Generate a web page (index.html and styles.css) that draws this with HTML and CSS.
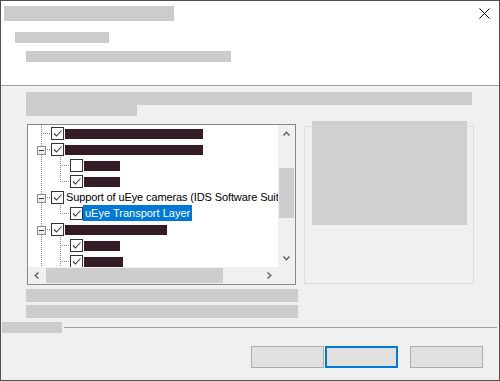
FILE: index.html
```html
<!DOCTYPE html>
<html lang="en">
<head>
<meta charset="utf-8">
<title>Setup</title>
<link rel="stylesheet" href="styles.css">
</head>
<body>
<div class="window">
  <header class="header">
    <div class="header-top">
      <div class="ph ph-title"></div>
      <button class="close" aria-label="Close">
        <svg width="11" height="11" viewBox="0 0 11 11"><path d="M0.5 0.5L10.5 10.5M10.5 0.5L0.5 10.5" stroke="#000" stroke-width="1" fill="none"/></svg>
      </button>
    </div>
    <div class="ph ph-sub1"></div>
    <div class="ph ph-sub2"></div>
  </header>

  <main class="content">
    <div class="ph ph-desc1"></div>
    <div class="ph ph-desc2"></div>

    <div class="panes">
      <div class="tree">
        <div class="tree-items">
          <div class="row">
            <span class="g0 node"></span>
            <span class="cb on"><svg viewBox="0 0 11 11"><path d="M2 5.5L4.5 8L9.5 2.5"/></svg></span>
            <span class="bar" style="width:138px"></span>
          </div>
          <div class="row">
            <span class="g0 node"><span class="exp"></span></span>
            <span class="cb on"><svg viewBox="0 0 11 11"><path d="M2 5.5L4.5 8L9.5 2.5"/></svg></span>
            <span class="bar" style="width:138px"></span>
          </div>
          <div class="row">
            <span class="g0"></span><span class="g1"></span>
            <span class="cb"></span>
            <span class="bar" style="width:36px"></span>
          </div>
          <div class="row">
            <span class="g0"></span><span class="g1 last"></span>
            <span class="cb on"><svg viewBox="0 0 11 11"><path d="M2 5.5L4.5 8L9.5 2.5"/></svg></span>
            <span class="bar" style="width:36px"></span>
          </div>
          <div class="row">
            <span class="g0 node"><span class="exp"></span></span>
            <span class="cb on"><svg viewBox="0 0 11 11"><path d="M2 5.5L4.5 8L9.5 2.5"/></svg></span>
            <span class="label">Support of uEye cameras (IDS Software Suite)</span>
          </div>
          <div class="row">
            <span class="g0"></span><span class="g1 last"></span>
            <span class="cb on"><svg viewBox="0 0 11 11"><path d="M2 5.5L4.5 8L9.5 2.5"/></svg></span>
            <span class="label selected">uEye Transport Layer</span>
          </div>
          <div class="row">
            <span class="g0 node"><span class="exp"></span></span>
            <span class="cb on"><svg viewBox="0 0 11 11"><path d="M2 5.5L4.5 8L9.5 2.5"/></svg></span>
            <span class="bar" style="width:102px"></span>
          </div>
          <div class="row">
            <span class="g0"></span><span class="g1"></span>
            <span class="cb on"><svg viewBox="0 0 11 11"><path d="M2 5.5L4.5 8L9.5 2.5"/></svg></span>
            <span class="bar" style="width:36px"></span>
          </div>
          <div class="row">
            <span class="g0"></span><span class="g1"></span>
            <span class="cb on"><svg viewBox="0 0 11 11"><path d="M2 5.5L4.5 8L9.5 2.5"/></svg></span>
            <span class="bar" style="width:39px"></span>
          </div>
        </div>

        <div class="vscroll">
          <span class="sbtn"><svg width="7" height="5" viewBox="0 0 7 5"><path d="M0.5 4.5L3.5 1.2L6.5 4.5"/></svg></span>
          <span class="vtrack"><span class="vthumb"></span></span>
          <span class="sbtn"><svg width="7" height="5" viewBox="0 0 7 5"><path d="M0.5 0.5L3.5 3.8L6.5 0.5"/></svg></span>
        </div>

        <div class="hscroll">
          <span class="sbtn"><svg width="5" height="7" viewBox="0 0 5 7"><path d="M4.5 0.5L1.2 3.5L4.5 6.5"/></svg></span>
          <span class="htrack"><span class="hthumb"></span></span>
          <span class="sbtn"><svg width="5" height="7" viewBox="0 0 5 7"><path d="M0.5 0.5L3.8 3.5L0.5 6.5"/></svg></span>
        </div>
        <div class="corner"></div>
      </div>

      <div class="group">
        <div class="ph preview"></div>
      </div>
    </div>

    <div class="ph ph-note1"></div>
    <div class="ph ph-note2"></div>
  </main>

  <div class="sep">
    <div class="ph ph-sep"></div>
    <div class="sep-line"></div>
  </div>

  <div class="buttons">
    <button class="btn"></button>
    <button class="btn focus"></button>
    <button class="btn wide-gap"></button>
  </div>
</div>
</body>
</html>
```

FILE: styles.css
```css
* { box-sizing: border-box; }

html, body {
  margin: 0;
  padding: 0;
  background: #f0f0f0;
}

body {
  font-family: "Liberation Sans", Arial, sans-serif;
  font-size: 11px;
  color: #000;
}

.window {
  width: 500px;
  height: 381px;
  border: 1px solid #505050;
  background: #f0f0f0;
  overflow: hidden;
}

.ph { background: #cccccc; }

/* header */
.header {
  height: 85px;
  background: #fff;
  border-bottom: 1px solid #a0a0a0;
}

.header-top {
  display: flex;
  justify-content: space-between;
  align-items: flex-start;
  padding: 5px 9px 0 3px;
}

.ph-title { width: 170px; height: 15px; }

.close {
  width: 11px;
  height: 11px;
  margin-top: 2px;
  padding: 0;
  border: 0;
  background: none;
  display: block;
}
.close svg { display: block; }

.ph-sub1 { width: 94px; height: 11px; margin: 11px 0 0 14px; }
.ph-sub2 { width: 205px; height: 11px; margin: 8px 0 0 25px; }

/* content */
.content { padding: 6px 0 0 25px; }

.ph-desc1 { width: 446px; height: 13px; }
.ph-desc2 { width: 111px; height: 11px; }

.panes {
  display: flex;
  align-items: flex-start;
  margin-top: 8px;
}

.tree {
  margin-left: 1px;
  width: 269px;
  height: 161px;
  border: 1px solid #828790;
  display: grid;
  grid-template-columns: 250px 17px;
  grid-template-rows: 142px 17px;
  background: #fff;
}

.tree-items {
  overflow: hidden;
  background: #fff;
}

.row {
  display: flex;
  height: 16px;
  white-space: nowrap;
}

.g0, .g1 {
  flex: none;
  height: 16px;
  display: flex;
  align-items: flex-start;
}

.g0 {
  width: 23px;
  background:
    repeating-linear-gradient(to bottom, #8a8a8a 0 1px, transparent 1px 2px) 13px 0 / 1px 100% no-repeat;
}
.g0.node {
  background:
    repeating-linear-gradient(to right, #8a8a8a 0 1px, transparent 1px 2px) 15px 8px / 8px 1px no-repeat,
    repeating-linear-gradient(to bottom, #8a8a8a 0 1px, transparent 1px 2px) 13px 0 / 1px 100% no-repeat;
}

.g1 {
  width: 19px;
  background:
    repeating-linear-gradient(to right, #8a8a8a 0 1px, transparent 1px 2px) 11px 8px / 8px 1px no-repeat,
    repeating-linear-gradient(to bottom, #8a8a8a 0 1px, transparent 1px 2px) 9px 0 / 1px 100% no-repeat;
}
.g1.last {
  background:
    repeating-linear-gradient(to right, #8a8a8a 0 1px, transparent 1px 2px) 11px 8px / 8px 1px no-repeat,
    repeating-linear-gradient(to bottom, #8a8a8a 0 1px, transparent 1px 2px) 9px 0 / 1px 9px no-repeat;
}

.exp {
  width: 9px;
  height: 9px;
  margin: 5px 0 0 9px;
  border: 1px solid #919191;
  background: linear-gradient(#ffffff, #e4e4e4);
  display: flex;
  align-items: center;
  justify-content: center;
}
.exp::before {
  content: "";
  width: 5px;
  height: 1px;
  background: #1f3a8a;
}

.cb {
  flex: none;
  width: 13px;
  height: 13px;
  margin-top: 2px;
  border: 1px solid #333;
  background: #fff;
}
.cb svg {
  display: block;
  width: 11px;
  height: 11px;
  fill: none;
  stroke: #3a3a3a;
  stroke-width: 1.1;
}

.bar {
  flex: none;
  height: 10px;
  margin: 4px 0 0 1px;
  background: #351b25;
}

.label {
  flex: none;
  height: 16px;
  line-height: 16px;
  padding: 0 2px;
  letter-spacing: -0.12px;
}
.label.selected {
  background: #0078d7;
  color: #fff;
  letter-spacing: 0;
}

/* scrollbars */
.vscroll {
  background: #f0f0f0;
  display: flex;
  flex-direction: column;
}
.sbtn {
  flex: none;
  width: 17px;
  height: 17px;
  display: flex;
  align-items: center;
  justify-content: center;
}
.sbtn svg {
  display: block;
  fill: none;
  stroke: #606060;
  stroke-width: 1.4;
}
.vtrack { flex: 1; padding: 26px 1px 0; }
.vthumb { display: block; height: 50px; background: #cdcdcd; }

.hscroll {
  background: #f0f0f0;
  display: flex;
}
.htrack { flex: 1; padding: 1px 0 1px 1px; }
.hthumb { display: block; width: 177px; height: 15px; background: #cdcdcd; }

.corner { background: #f0f0f0; }

/* right group */
.group {
  margin: 2px 0 0 8px;
  width: 170px;
  height: 158px;
  border: 1px solid #dcdcdc;
}
.preview {
  width: 155px;
  height: 104px;
  margin: -6px 0 0 7px;
  background: #d0d0d0;
}

.ph-note1 { width: 272px; height: 13px; margin-top: 4px; }
.ph-note2 { width: 272px; height: 13px; margin-top: 3px; }

/* separator */
.sep {
  display: flex;
  align-items: center;
  margin-top: 4px;
  padding: 0 2px 0 1px;
  height: 11px;
}
.ph-sep { width: 60px; height: 11px; flex: none; }
.sep-line {
  flex: 1;
  height: 1px;
  margin-left: 2px;
  background: #a0a0a0;
}

/* buttons */
.buttons {
  display: flex;
  justify-content: flex-end;
  gap: 1px;
  margin-top: 13px;
  padding-right: 16px;
}
.btn {
  width: 73px;
  height: 22px;
  padding: 0;
  border: 1px solid #adadad;
  background: #e1e1e1;
}
.btn.focus { border: 2px solid #0078d7; }
.btn.wide-gap { margin-left: 11px; }
```
